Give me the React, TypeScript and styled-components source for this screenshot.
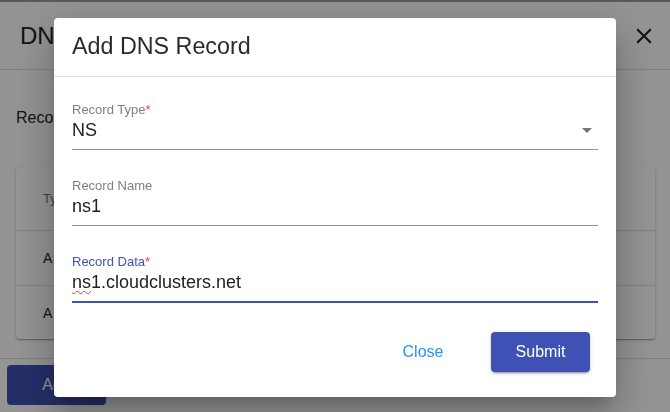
import React from "react";
import styled, { createGlobalStyle } from "styled-components";

const GlobalStyle = createGlobalStyle`
  html, body {
    margin: 0;
    padding: 0;
    height: 100%;
  }
  body {
    background: #999999;
    font-family: "Liberation Sans", Arial, sans-serif;
    overflow: hidden;
  }
  * { box-sizing: border-box; }
`;

/* ---------- underlying page ---------- */

const Page = styled.div`
  height: 100vh;
  padding-top: 2px;
  display: flex;
  flex-direction: column;
`;

const Panel = styled.div`
  flex: 1;
  background: #ffffff;
  display: flex;
  flex-direction: column;
`;

const PanelHeader = styled.div`
  height: 68px;
  border-bottom: 1px solid #dddddd;
  display: flex;
  align-items: center;
  justify-content: space-between;
  padding: 0 13px 0 20px;
`;

const PanelTitle = styled.div`
  font-size: 24px;
  color: #222222;
`;

const IconButton = styled.button`
  border: 0;
  background: transparent;
  padding: 0;
  display: flex;
  color: #222222;
`;

const PanelBody = styled.div`
  flex: 1;
  padding: 38px 15px 0 16px;
  display: flex;
  flex-direction: column;
`;

const SectionLabel = styled.div`
  font-size: 16px;
  line-height: 19px;
  color: #222222;
`;

const Card = styled.div`
  margin-top: 40px;
  background: #ffffff;
  border-radius: 4px;
  box-shadow: 0px 1px 3px 0px rgba(0, 0, 0, 0.2), 0px 1px 1px 0px rgba(0, 0, 0, 0.14),
    0px 2px 1px -1px rgba(0, 0, 0, 0.12);
`;

const TableRow = styled.div<{ $h: number; $last?: boolean }>`
  height: ${(p) => p.$h}px;
  display: grid;
  grid-template-columns: 120px 1fr 1fr;
  align-items: center;
  padding-left: 27px;
  border-bottom: ${(p) => (p.$last ? "none" : "1px solid #e0e0e0")};
`;

const Cell = styled.div<{ $head?: boolean }>`
  font-size: ${(p) => (p.$head ? 13 : 14)}px;
  color: ${(p) => (p.$head ? "#757575" : "#222222")};
`;

const PanelFooter = styled.div`
  border-top: 1px solid #dddddd;
  margin-top: 18px;
  padding: 6px 7px 7px;
  display: flex;
`;

const BackButton = styled.button`
  width: 99px;
  height: 40px;
  border: 0;
  border-radius: 4px;
  background: #3f51b5;
  color: #ffffff;
  font-family: inherit;
  font-size: 16px;
`;

/* ---------- dialog ---------- */

const Overlay = styled.div`
  position: fixed;
  inset: 0;
  padding-top: 3px;
  background: rgba(0, 0, 0, 0.42);
  display: flex;
  align-items: center;
  justify-content: center;
`;

const Dialog = styled.div`
  width: 562px;
  background: #ffffff;
  border-radius: 4px;
  display: flex;
  flex-direction: column;
  box-shadow: 0px 11px 15px -7px rgba(0, 0, 0, 0.2), 0px 24px 38px 3px rgba(0, 0, 0, 0.14),
    0px 9px 46px 8px rgba(0, 0, 0, 0.12);
`;

const DialogTitle = styled.div`
  padding: 15px 18px 17px;
  font-family: "Liberation Sans", Arial, sans-serif;
  font-size: 23.3px;
  line-height: 26px;
  font-weight: 400;
  color: #2a2a2a;
  border-bottom: 1px solid #e0e0e0;
`;

const DialogContent = styled.div`
  padding: 25px 18px 0;
  display: flex;
  flex-direction: column;
  gap: 28px;
`;

const Field = styled.div`
  display: flex;
  flex-direction: column;
`;

const Label = styled.label<{ $focused?: boolean }>`
  font-size: 13px;
  line-height: 15px;
  color: ${(p) => (p.$focused ? "#3f51b5" : "#808080")};
`;

const Required = styled.span`
  color: #f44336;
`;

const ValueRow = styled.div<{ $focused?: boolean }>`
  display: flex;
  align-items: center;
  justify-content: space-between;
  padding: 3px 0 8px;
  font-size: 18px;
  line-height: 21px;
  color: #222222;
  border-bottom: ${(p) => (p.$focused ? "2px solid #3f51b5" : "1px solid #949494")};
`;

const Misspelled = styled.span`
  text-decoration: underline wavy #e53935;
  text-decoration-thickness: 1px;
  text-underline-offset: 2px;
`;

const ArrowIcon = styled.svg`
  width: 24px;
  height: 24px;
  margin: -2px -1px -1px 0;
  fill: #757575;
`;

const DialogActions = styled.div`
  padding: 29px 26px 25px;
  display: flex;
  justify-content: flex-end;
  align-items: center;
  gap: 36px;
`;

const TextButton = styled.button`
  width: 64px;
  height: 40px;
  border: 0;
  background: transparent;
  color: #2196f3;
  font-family: inherit;
  font-size: 16px;
  padding: 0;
`;

const PrimaryButton = styled.button`
  width: 99px;
  height: 40px;
  border: 0;
  border-radius: 4px;
  background: #3f51b5;
  color: #ffffff;
  font-family: inherit;
  font-size: 16px;
  box-shadow: 0px 3px 1px -2px rgba(0, 0, 0, 0.2), 0px 2px 2px 0px rgba(0, 0, 0, 0.14),
    0px 1px 5px 0px rgba(0, 0, 0, 0.12);
`;

export default function App() {
  return (
    <>
      <GlobalStyle />
      <Page>
        <Panel>
          <PanelHeader>
            <PanelTitle>DNS</PanelTitle>
            <IconButton aria-label="close">
              <svg width="26" height="26" viewBox="0 0 24 24" fill="currentColor">
                <path d="M19 6.41L17.59 5 12 10.59 6.41 5 5 6.41 10.59 12 5 17.59 6.41 19 12 13.41 17.59 19 19 17.59 13.41 12z" />
              </svg>
            </IconButton>
          </PanelHeader>
          <PanelBody>
            <SectionLabel>Records</SectionLabel>
            <Card>
              <TableRow $h={64}>
                <Cell $head>Type</Cell>
                <Cell $head>Name</Cell>
                <Cell $head>Data</Cell>
              </TableRow>
              <TableRow $h={55}>
                <Cell>A</Cell>
                <Cell>@</Cell>
                <Cell>192.168.1.10</Cell>
              </TableRow>
              <TableRow $h={53} $last>
                <Cell>A</Cell>
                <Cell>www</Cell>
                <Cell>192.168.1.10</Cell>
              </TableRow>
            </Card>
          </PanelBody>
          <PanelFooter>
            <BackButton>Add</BackButton>
          </PanelFooter>
        </Panel>
      </Page>
      <Overlay>
        <Dialog>
          <DialogTitle>Add DNS Record</DialogTitle>
          <DialogContent>
            <Field>
              <Label>
                Record Type<Required>*</Required>
              </Label>
              <ValueRow>
                <span>NS</span>
                <ArrowIcon viewBox="0 0 24 24">
                  <path d="M7 10l5 5 5-5z" />
                </ArrowIcon>
              </ValueRow>
            </Field>
            <Field>
              <Label>Record Name</Label>
              <ValueRow>
                <span>ns1</span>
              </ValueRow>
            </Field>
            <Field>
              <Label $focused>
                Record Data<Required>*</Required>
              </Label>
              <ValueRow $focused>
                <span>
                  <Misspelled>ns</Misspelled>1.cloudclusters.net
                </span>
              </ValueRow>
            </Field>
          </DialogContent>
          <DialogActions>
            <TextButton>Close</TextButton>
            <PrimaryButton>Submit</PrimaryButton>
          </DialogActions>
        </Dialog>
      </Overlay>
    </>
  );
}
